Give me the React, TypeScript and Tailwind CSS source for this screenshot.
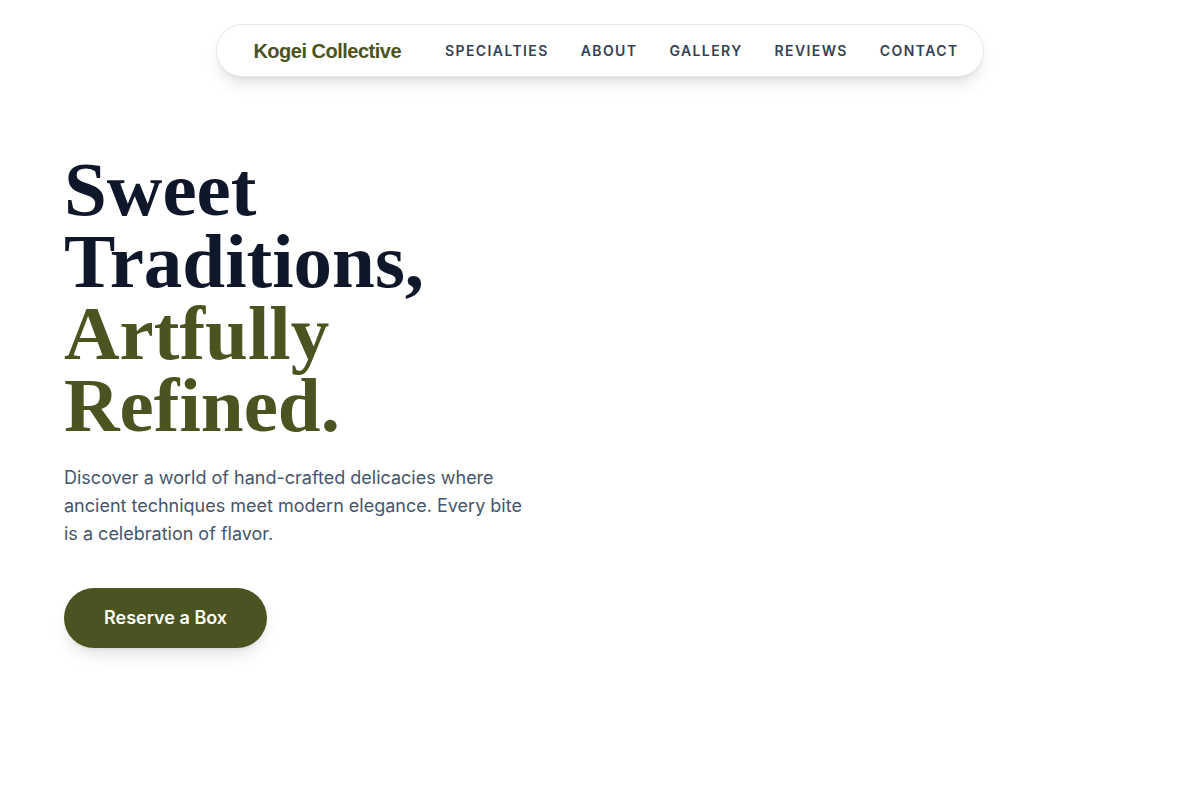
const links = ['Specialties', 'About', 'Gallery', 'Reviews', 'Contact']

export default function App() {
  return (
    <div className="min-h-screen bg-white font-['Inter',sans-serif]">
      {/* Floating nav */}
      <div className="flex justify-center pt-6">
        <nav className="flex h-[53px] items-center rounded-full border border-gray-200 bg-white pl-9 pr-6 shadow-lg">
          <span className="mr-11 font-['Liberation_Sans',Arial,sans-serif] text-[20px] font-semibold tracking-tight text-[#4b5320]">
            Kogei Collective
          </span>
          <div className="flex items-center gap-8">
            {links.map((l) => (
              <a
                key={l}
                href="#"
                className="text-sm font-semibold uppercase tracking-widest text-gray-700"
              >
                {l}
              </a>
            ))}
          </div>
        </nav>
      </div>

      {/* Hero */}
      <section className="px-16 pt-[76px]">
        <h1 className="font-['Liberation_Serif','Times_New_Roman',serif] text-[77px] font-bold leading-[72px] text-slate-900">
          Sweet
          <br />
          Traditions,
          <br />
          <span className="text-[#4b5320]">
            Artfully
            <br />
            Refined.
          </span>
        </h1>
        <p className="mt-[23px] max-w-[470px] text-lg leading-7 text-slate-600">
          Discover a world of hand-crafted delicacies where ancient techniques meet modern elegance.
          Every bite is a celebration of flavor.
        </p>
        <button className="mt-10 rounded-full bg-[#4b5320] px-10 py-4 text-lg font-semibold leading-7 text-white shadow-lg">
          Reserve a Box
        </button>
      </section>
    </div>
  )
}
